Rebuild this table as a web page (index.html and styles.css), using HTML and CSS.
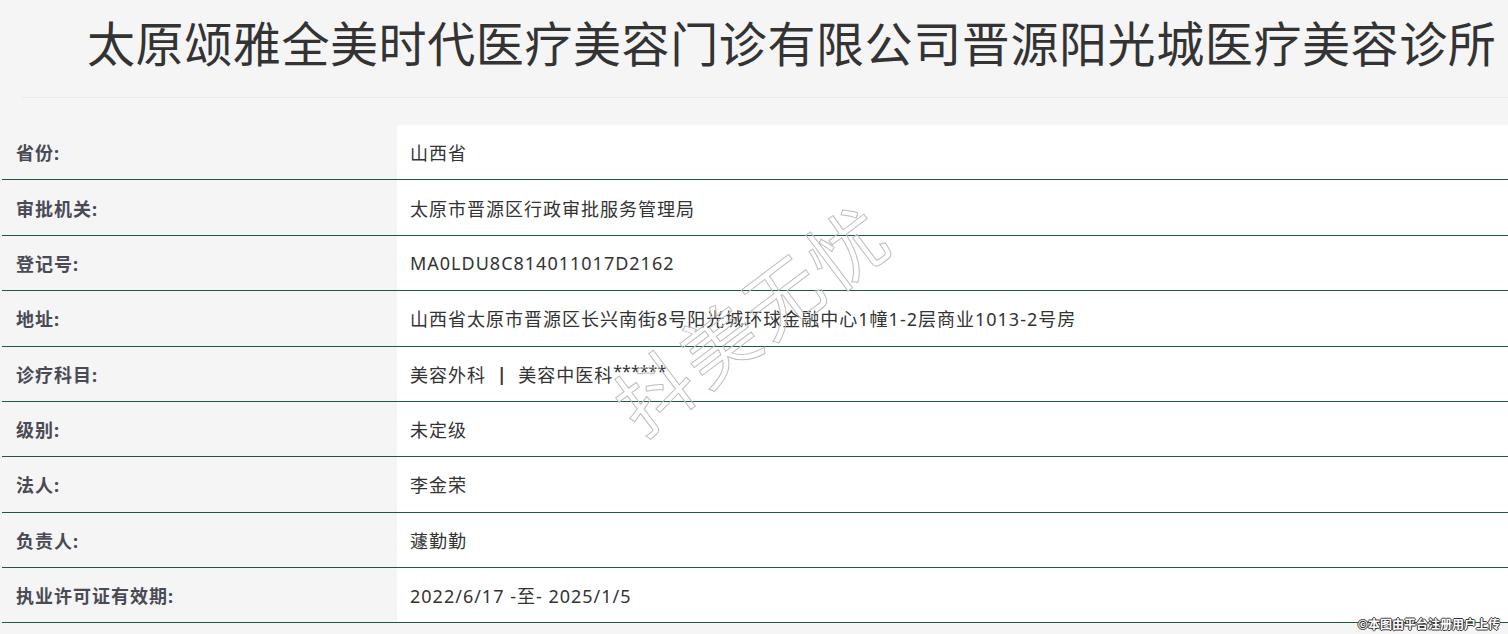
FILE: index.html
```html
<!DOCTYPE html>
<html lang="zh-CN">
<head>
<meta charset="utf-8">
<title>太原颂雅全美时代医疗美容门诊有限公司晋源阳光城医疗美容诊所</title>
<link rel="stylesheet" href="styles.css">
</head>
<body>
<div class="page">
  <header class="head">
    <h1 class="title">太原颂雅全美时代医疗美容门诊有限公司晋源阳光城医疗美容诊所</h1>
  </header>
  <div class="info">
    <div class="row"><div class="label">省份:</div><div class="value">山西省</div></div>
    <div class="row"><div class="label">审批机关:</div><div class="value">太原市晋源区行政审批服务管理局</div></div>
    <div class="row"><div class="label">登记号:</div><div class="value">MA0LDU8C814011017D2162</div></div>
    <div class="row"><div class="label">地址:</div><div class="value">山西省太原市晋源区长兴南街8号阳光城环球金融中心1幢1-2层商业1013-2号房</div></div>
    <div class="row"><div class="label">诊疗科目:</div><div class="value">美容外科 <span class="sep">|</span> 美容中医科<span class="stars">******</span></div></div>
    <div class="row"><div class="label">级别:</div><div class="value">未定级</div></div>
    <div class="row"><div class="label">法人:</div><div class="value">李金荣</div></div>
    <div class="row"><div class="label">负责人:</div><div class="value">蘧勤勤</div></div>
    <div class="row"><div class="label">执业许可证有效期:</div><div class="value">2022/6/17 -至- 2025/1/5</div></div>
  </div>
  <div class="watermark">抖美无忧</div>
  <div class="credit">©本图由平台注册用户上传</div>
</div>
</body>
</html>
```

FILE: styles.css
```css
html, body {
  margin: 0;
  padding: 0;
  background: #f5f5f5;
}
body {
  font-family: "Noto Sans", "Noto Sans CJK SC", sans-serif;
  color: #333;
}
.page {
  position: relative;
  width: 1508px;
  height: 634px;
  overflow: hidden;
}
.head {
  margin-left: 22px;
  padding: 7px 0 0 65px;
  box-sizing: border-box;
  height: 98px;
  border-bottom: 1px solid #e9e9e9;
}
.title {
  margin: 0;
  font-size: 48px;
  line-height: 68px;
  font-weight: 400;
  letter-spacing: 0.6px;
  color: #333;
  white-space: nowrap;
  font-family: "Noto Sans CJK SC", sans-serif;
}
.info {
  margin-top: 27px;
  margin-left: 2px;
}
.row {
  display: flex;
  height: 55.375px;
  box-sizing: border-box;
  border-bottom: 1px solid #1f5a40;
}
.label {
  width: 395px;
  flex: none;
  box-sizing: border-box;
  padding-left: 14px;
  display: flex;
  align-items: center;
  font-size: 18px;
  font-weight: 700;
  letter-spacing: 1px;
  color: #4a4a55;
  background: #f5f5f5;
}
.value {
  flex: 1;
  padding-left: 13px;
  display: flex;
  align-items: center;
  font-size: 18px;
  letter-spacing: 1px;
  color: #333;
  background: #fff;
  white-space: pre;
}
.sep {
  font-weight: 700;
  margin: 0 5px;
}
.stars {
  font-size: 16px;
  letter-spacing: 0;
  position: relative;
  top: -3px;
}
.watermark {
  position: absolute;
  left: 750px;
  top: 316px;
  font-family: "Noto Sans CJK SC", sans-serif;
  font-size: 76px;
  line-height: 1;
  letter-spacing: 4px;
  color: transparent;
  -webkit-text-stroke: 1px #bdbdbd;
  transform: translate(-50%, -50%) rotate(-37deg);
  white-space: nowrap;
  pointer-events: none;
}
.credit {
  position: absolute;
  right: 8px;
  bottom: 2px;
  font-family: "Noto Sans CJK SC", sans-serif;
  font-size: 12px;
  font-weight: 700;
  color: #fff;
  text-shadow: -1px 0 #333, 1px 0 #333, 0 -1px #333, 0 1px #333;
  white-space: nowrap;
}
```
